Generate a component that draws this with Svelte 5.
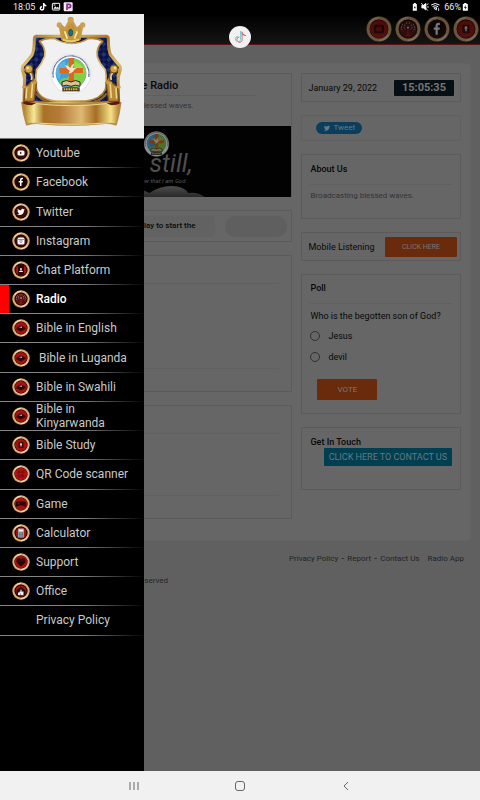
<script>
	const menu = [
		{ label: 'Youtube', icon: 'youtube' },
		{ label: 'Facebook', icon: 'facebook' },
		{ label: 'Twitter', icon: 'twitter' },
		{ label: 'Instagram', icon: 'instagram' },
		{ label: 'Chat Platform', icon: 'chat' },
		{ label: 'Radio', icon: 'radio', active: true },
		{ label: 'Bible in English', icon: 'bible' },
		{ label: '\u00a0Bible in Luganda', icon: 'bible' },
		{ label: 'Bible in Swahili', icon: 'bible' },
		{ label: 'Bible in Kinyarwanda', icon: 'bible' },
		{ label: 'Bible Study', icon: 'study' },
		{ label: 'QR Code scanner', icon: 'qr' },
		{ label: 'Game', icon: 'game' },
		{ label: 'Calculator', icon: 'calculator' },
		{ label: 'Support', icon: 'support' },
		{ label: 'Office', icon: 'office' },
		{ label: 'Privacy Policy', icon: '' }
	];

	const shortcuts = [
		{ label: 'Youtube', icon: 'youtubeRed' },
		{ label: 'Radio', icon: 'radio' },
		{ label: 'Facebook', icon: 'facebook' },
		{ label: 'Bible Study', icon: 'study' }
	];

	const answers = ['Jesus', 'devil'];
	let vote = $state('');
</script>

{#snippet badge(icon)}
	<svg class="badge" viewBox="0 0 36 36" aria-hidden="true">
		<circle cx="18" cy="18" r="17.5" fill="#8a5a2c" />
		<circle cx="18" cy="18" r="15" fill="none" stroke="#dcae7a" stroke-width="4" />
		<path d="M5 10A15.5 15.5 0 0 1 18 2.500M31 26A15.500 15.500 0 0 1 18 33.500" fill="none" stroke="#f7e2bd" stroke-width="2" />
		<circle cx="18" cy="18" r="13" fill="#1b0504" />
		<circle cx="18" cy="18" r="11" fill={['youtube', 'facebook', 'twitter', 'instagram'].includes(icon) ? '#3d0a08' : '#a80f10'} />
		{#if icon === 'youtube'}
			<rect x="11" y="13" width="14" height="10" rx="3" fill="#fff" />
			<path d="M16 15.500v5l4-2.500z" fill="#3d0a08" />
		{:else if icon === 'youtubeRed'}
			<circle cx="18" cy="18" r="12.500" fill="#a80f10" />
			<rect x="11" y="12" width="14" height="12" rx="3" fill="#330606" />
			<rect x="14" y="15" width="8" height="6" rx="1" fill="#8c1111" />
		{:else if icon === 'facebook'}
			<circle cx="18" cy="18" r="10.500" fill="#140404" />
			<path d="M16 26v-7h-2.500v-3H16v-2c0-3 1.500-4.500 4-4.500h2v3h-1.500c-1 0-1.500.5-1.500 1.500v2h3l-.5 3H19v7z" fill="#fff" />
		{:else if icon === 'twitter'}
			<path d="M10 23c6 3 14 0 14-8l2-2-2 .3 1-1.500-2 .7c-2-2-5-.5-4.500 2-3 0-5-1-7-3-1 2 0 3.500 1 4.500l-1.500-.4c0 2 1 3 2.500 3.500h-1.500c.5 1.300 1.500 2 3 2.300-1.500 1-3 1.500-5 1.600z" fill="#fff" />
		{:else if icon === 'instagram'}
			<rect x="11" y="11" width="14" height="14" rx="3" fill="#fff" />
			<path d="M12 15h12" stroke="#4a1412" stroke-width="1" />
			<circle cx="18" cy="18.500" r="2.500" fill="none" stroke="#8a6462" stroke-width="1.500" />
		{:else if icon === 'chat'}
			<rect x="12" y="8" width="12" height="20" fill="#280507" />
			<circle cx="18" cy="16" r="2" fill="#eee" />
			<path d="M14 22c0-4 8-4 8 0z" fill="#eee" />
		{:else if icon === 'radio'}
			<circle cx="18" cy="18" r="10.500" fill="#54100f" />
			<path d="M17 19h2l2 9h-6z" fill="#8f1112" />
			<circle cx="18" cy="16" r="1.500" fill="#ddd" />
			<path d="M14 12c-2 2-2 5 0 7M22 12c2 2 2 5 0 7M11 11c-3 4-3 7 0 10M25 11c3 4 3 7 0 10M16 9v3M20 9v3" fill="none" stroke="#aaa" stroke-width="1.300" stroke-dasharray="2 1.500" />
		{:else if icon === 'bible'}
			<circle cx="18" cy="18" r="12" fill="#a80f10" />
			<path d="M9 18l8-5 10 4-9 6z" fill="#240506" />
			<path d="M9 18l9 4 9-5v3l-9 5-9-4z" fill="#300707" />
			<path d="M15 17l5-1M18 15l1 3" stroke="#ddd" stroke-width="1.300" />
		{:else if icon === 'study'}
			<circle cx="18" cy="18" r="12" fill="#a80f10" />
			<rect x="13" y="12" width="10" height="12" rx="1" fill="#3d0909" />
			<path d="M18 14v7M16 16.500h4" stroke="#f5eaea" stroke-width="2" />
		{:else if icon === 'qr'}
			<circle cx="18" cy="18" r="12.500" fill="#b01012" />
			<path d="M12 12h4v4h-4zM20 12h4v4h-4zM12 20h4v4h-4zM19 19h2v2h3v3h-4z" fill="none" stroke="#600d10" stroke-width="1.500" />
		{:else if icon === 'game'}
			<circle cx="18" cy="18" r="12.500" fill="#a80f10" />
			<path d="M10 13h16c3 0 3 9 2 10-2 2-5-2-6-2h-8c-1 0-4 4-6 2-1-1-1-10 2-10z" fill="#250506" />
			<path d="M13 15v4M11 17h4M21 16h2M23 19h2" stroke="#8b1715" stroke-width="1" />
		{:else if icon === 'calculator'}
			<rect x="12" y="9" width="12" height="18" rx="1" fill="#8f9ba1" />
			<rect x="13.500" y="11" width="9" height="4" fill="#edf5f6" />
			<path d="M14 18h8M14 21h8M14 24h8" stroke="#5c686d" stroke-width="2" stroke-dasharray="2 1" />
		{:else if icon === 'support'}
			<circle cx="18" cy="18" r="12.500" fill="#a80f10" />
			<path d="M18 27c-5-4-10-8-9-13 1-4 7-5 9-1 2-4 8-3 9 1 1 5-4 9-9 13z" fill="#280607" />
			<path d="M13 14l3 3 3-3 3 4" fill="none" stroke="#761415" />
		{:else if icon === 'office'}
			<path d="M9 17l9-8 9 8v9H9z" fill="#220506" />
			<path d="M12 21h3v-2h2v-4h2v4h4v7H12z" fill="#f0eeee" />
			<path d="M17 23h1v3h-1z" fill="#5a1312" />
		{/if}
	</svg>
{/snippet}

{#snippet emblem()}
	<circle r="59" fill="#fff" stroke="#c3cbe6" stroke-width="1.500" />
	<path d="M-53 10A54 54 0 1 1 53 10" fill="none" stroke="#29325f" stroke-width="4" stroke-dasharray="2 1.500" />
	<circle cy="-2" r="46" fill="#3b9fe0" />
	<path d="M0-48A46 46 0 0 1 44 10Q38 34 8 43L-14 36-14 14-4 2-12-28z" fill="#7fd044" />
	<path d="M-45-12q8-22 28-28l2 26-16 6-2 26q-14-10-12-30z" fill="#58b3e8" />
	<path d="M-36 22q14-16 24-8v22q-16-2-24-14z" fill="#74c94c" />
	<path d="M12-36q22 8 30 28l-10 8-20-12z" fill="#9edc4a" />
	<path d="M-7-48H9v30h27v15H9v30H-7V-3h-28v-15h28z" fill="#dc691f" />
	<path d="M-18-27q10 2 16 9 4-12 12-13-2 8-5 13 8-1 12 1-8 3-10 9-6 7-14 6 1-5 4-7-10-5-15-18z" fill="#f3e6d6" />
	<path d="M-27 24q13-9 27 0 14-9 27 0v13q-13-7-27 0-14-7-27 0z" fill="#d9c49b" stroke="#322116" stroke-width="3" />
	<path d="M-26 40h52v12h-52z" fill="#3e2b18" />
	<path d="M-22 46h44" stroke="#d7b35c" stroke-width="6" stroke-dasharray="5 2" />
{/snippet}

<div class="screen">
	<div class="status">
		<span>18:05</span>
		<svg class="status-left" viewBox="0 0 105 30" aria-hidden="true">
			<path d="M14 3v16a5 5 0 1 1-5-5M14 4q2 7 8 7" fill="none" stroke="#fff" stroke-width="4.500" />
			<rect x="40" y="4" width="22" height="20" rx="2" fill="none" stroke="#fff" stroke-width="3" />
			<path d="M43 20l6-7 4 4 4-3 4 6z" fill="#fff" /><path d="M44 9h5" stroke="#fff" stroke-width="3" />
			<rect x="74" y="1" width="27" height="27" rx="3" fill="#f5eef9" />
			<path d="M84 24V7h6a5 5 0 0 1 0 10h-6" fill="none" stroke="#803093" stroke-width="5" />
			<path d="M84 24v-8" stroke="#d8343f" stroke-width="5" />
		</svg>
		<svg class="status-right" viewBox="0 0 92 30" aria-hidden="true">
			<path d="M11 6h3V3h6v3h3v20H11z" fill="#fff" /><path d="M14 19l3-7 3 7z" fill="#111" />
			<path d="M38 10h5l7-6v20l-7-6h-5zM36 3l20 23M52 9l6-4M53 15h6" fill="#fff" stroke="#fff" stroke-width="2.500" />
			<path d="M66 9q12-9 25 0M70 14q8-6 17 0M74 18q5-3 9 0l-4 5z" fill="none" stroke="#fff" stroke-width="3" />
			<path d="M82 25v-8l-3 3M88 17v9l3-3" fill="none" stroke="#fff" stroke-width="2" />
		</svg>
		<span>66%</span>
		<svg class="battery" viewBox="0 0 20 30" aria-hidden="true">
			<path d="M2 6h4V3h7v3h4v20H2z" fill="#fff" /><path d="M11 9l-6 8h4l-1 6 6-8h-4z" fill="#111" />
		</svg>
	</div>

	<header>
		{#each shortcuts as item}
			<a href="#{item.icon}" aria-label={item.label}>{@render badge(item.icon)}</a>
		{/each}
	</header>

	<div class="page">
		<main>
			<div class="column">
				<section class="panel station">
					<h1>Gospel Life Radio</h1>
					<p>Broadcasting blessed waves.</p>
					<svg class="banner" viewBox="0 0 272 71" preserveAspectRatio="xMaxYMid slice" role="img" aria-label="Be still">
						<defs>
							<linearGradient id="mist" x2="0" y2="1"><stop stop-color="#555" /><stop offset="1" stop-color="#292929" /></linearGradient>
						</defs>
						<rect width="272" height="71" fill="#020202" />
						<path d="M80 71V58q30-2 50 9 10-7 22-7 12 0 17 7 10-1 16 4z" fill="url(#mist)" />
						<g transform="translate(137 18) scale(.21)" opacity=".55">{@render emblem()}</g>
						<text x="173" y="46" text-anchor="end" font-size="25" font-style="italic" fill="#505050">Be still,</text>
						<text x="166" y="57" text-anchor="end" font-size="6" font-style="italic" fill="#5a5a5a">and know that I am God</text>
					</svg>
				</section>
				<section class="panel player">
					<p>Press play to start the</p>
					<div class="track"></div>
				</section>
				<section class="panel program"><div class="lines"></div></section>
				<section class="panel comments"><div class="lines"></div></section>
			</div>

			<div class="column">
				<section class="panel row date">
					<time>January 29, 2022</time>
					<strong>15:05:35</strong>
				</section>
				<section class="panel share">
					<a class="tweet" href="#tweet">
						<svg viewBox="8 9 20 17" aria-hidden="true"><path d="M10 23c6 3 14 0 14-8l2-2-2 .3 1-1.500-2 .7c-2-2-5-.5-4.500 2-3 0-5-1-7-3-1 2 0 3.500 1 4.500l-1.500-.4c0 2 1 3 2.500 3.500h-1.500c.5 1.300 1.500 2 3 2.300-1.500 1-3 1.500-5 1.600z" fill="currentColor" /></svg>
						Tweet
					</a>
				</section>
				<section class="panel about">
					<h2>About Us</h2>
					<p>Broadcasting blessed waves.</p>
				</section>
				<section class="panel row mobile">
					<span>Mobile Listening</span>
					<button class="orange">CLICK HERE</button>
				</section>
				<section class="panel poll">
					<h2>Poll</h2>
					<fieldset>
						<legend>Who is the begotten son of God?</legend>
						{#each answers as answer}
							<label><input type="radio" name="poll" value={answer} bind:group={vote} />{answer}</label>
						{/each}
					</fieldset>
					<button class="orange">VOTE</button>
				</section>
				<section class="panel contact">
					<h2>Get In Touch</h2>
					<button>CLICK HERE TO CONTACT US</button>
				</section>
			</div>
		</main>

		<footer>
			<div class="links">
				<a href="#privacy">Privacy Policy</a><b>-</b><a href="#report">Report</a><b>-</b><a href="#contact">Contact Us</a><a class="app" href="#app">Radio App</a>
			</div>
			<p>© 2022 All rights reserved</p>
		</footer>
	</div>

	<aside>
		<svg class="crest" viewBox="0 42 432 372" role="img" aria-label="Royal crest">
			<defs>
				<linearGradient id="gold" x2="1" y2="1">
					<stop stop-color="#9a6c28" /><stop offset=".22" stop-color="#dcbf72" /><stop offset=".45" stop-color="#ac7728" /><stop offset=".7" stop-color="#dfc06c" /><stop offset="1" stop-color="#8a5917" />
				</linearGradient>
				<linearGradient id="ribbon">
					<stop stop-color="#a56d18" /><stop offset=".12" stop-color="#f7e997" /><stop offset=".22" stop-color="#a87225" /><stop offset=".38" stop-color="#b47b39" /><stop offset=".6" stop-color="#e0b974" /><stop offset=".75" stop-color="#a56e24" /><stop offset=".9" stop-color="#f5e288" /><stop offset="1" stop-color="#a76e20" />
				</linearGradient>
				<pattern id="velvet" width="22" height="22" patternUnits="userSpaceOnUse" patternTransform="rotate(45)">
					<rect width="22" height="22" fill="#0a1248" /><rect width="11" height="11" fill="#1f3675" /><rect x="11" y="11" width="11" height="11" fill="#121f5c" />
				</pattern>
			</defs>
			<path d="M107 109h212q6 1 6 8 0 34 7 48 14 18 28 34 4 14-6 26l2 84H72l2-84q-10-12-6-26 14-16 28-34 7-14 7-48 0-7 4-8z" fill="url(#velvet)" stroke="url(#gold)" stroke-width="9" stroke-linejoin="round" />
			<path d="M118 124q20 18 16 45-8 22-24 40-6 30 0 60 10 30 60 34h88q45-5 58-34 6-30 0-60-18-18-24-40-4-27 16-45-18-12-44-8-20 14-50 14t-50-14q-26-4-46 8z" fill="#f1f1f1" stroke="url(#gold)" stroke-width="5" stroke-linejoin="round" />
			<path d="M180 75l16 13 16-30 17 30 17-13-8 42q-26 12-50 0z" fill="url(#gold)" stroke="#c49a4b" stroke-width="9" stroke-linejoin="round" />
			<path d="M184 84l14 12 14-26 15 26 14-12-7 34q-22 8-43 0z" fill="#c69435" />
			<path d="M194 94l8 22M232 94l-9 22" stroke="#f7ebaa" stroke-width="5" />
			<g fill="#c9a056"><circle cx="178" cy="75" r="8" /><circle cx="212" cy="59" r="9" /><circle cx="248" cy="75" r="8" /></g>
			<ellipse cx="212" cy="98" rx="6" ry="10" fill="#0a75a6" stroke="#243a2b" stroke-width="2" />
			<path d="M188 119q24 9 49 0" fill="none" stroke="#e9cb65" stroke-width="6" />
			{#each ['', 'translate(428 0) scale(-1 1)'] as flip}
				<g transform={flip}>
					<path d="M86 208q20 12 12 34l-22 20-4 42h30l8-58" fill="#b98933" stroke="#79501b" stroke-width="4" />
					<path d="M84 214q16 10 10 26M98 246l-4 48M80 262l-2 34" fill="none" stroke="#edd48a" stroke-width="5" />
					<circle cx="86" cy="207" r="12" fill="#d1a341" stroke="#73501e" stroke-width="3" />
					<circle cx="83" cy="204" r="4" fill="#f3e2a2" />
					<path d="M72 206q-6 18 2 34M66 262h20M92 248h18" fill="none" stroke="#caa04c" stroke-width="6" />
				</g>
			{/each}
			<path d="M108 280q15 20 38 25M320 280q-15 20-38 25" fill="none" stroke="#8f6422" stroke-width="7" />
			<path d="M66 308q20 8 40-2 108 14 216 0 20 10 40 2-4 34-14 66-20-6-40-4-94 9-188 0-20-2-40 4-10-32-14-66z" fill="url(#ribbon)" stroke="#b58b45" stroke-width="5" stroke-linejoin="round" />
			<path d="M66 309q10-8 22-2l20 3-14 6q-16 0-28-7zM362 309q-10-8-22-2l-20 3 14 6q16 0 28-7z" fill="#5a1a0c" />
			<path d="M108 311q106 12 212 0M96 368q120 10 236 0" fill="none" stroke="#ecd793" stroke-width="3" />
			<g transform="translate(213 222)">{@render emblem()}</g>
		</svg>
		<nav>
			{#each menu as item}
				<a class:active={item.active} href="#{item.label.trim()}">
					<span class="icon">{#if item.icon}{@render badge(item.icon)}{/if}</span>
					<span>{item.label}</span>
				</a>
			{/each}
		</nav>
	</aside>

	<button class="bubble" aria-label="TikTok">
		<svg viewBox="0 0 24 24" aria-hidden="true">
			<g fill="none" stroke-width="1.500"><path d="M13 3v13a4 4 0 1 1-4-5M13 4q1 5 6 5" stroke="#56cbd3" /><path d="M15 4v13a4 4 0 1 1-4-5M15 5q1 5 6 5" stroke="#dd5364" /><path d="M14 3.500v13a4 4 0 1 1-4-5" stroke="#d5d5da" stroke-width="1" /></g>
		</svg>
	</button>

	<div class="system">
		<button aria-label="Recent apps"><svg viewBox="0 0 12 12"><path d="M2 2v8M6 2v8M10 2v8" /></svg></button>
		<button aria-label="Home"><svg viewBox="0 0 12 12"><rect x="1.500" y="1.500" width="9" height="9" rx="2.500" /></svg></button>
		<button aria-label="Back"><svg viewBox="0 0 12 12"><path d="M8 2L4 6l4 4" /></svg></button>
	</div>
</div>

<style>
	:global(body) {
		margin: 0;
		background: #606060;
	}

	.screen {
		position: relative;
		min-height: 100vh;
		display: flex;
		flex-direction: column;
		background: #606060;
		color: #080808;
		font-family: Roboto, sans-serif;
		font-size: 9px;
		line-height: 12px;
	}

	.screen * {
		box-sizing: border-box;
	}

	h1, h2, p {
		margin: 0;
		font-weight: 500;
	}

	a {
		color: inherit;
		text-decoration: none;
	}

	button {
		border: 0;
		padding: 0;
		font-family: inherit;
		cursor: pointer;
	}

	svg {
		display: block;
	}

	.status {
		height: 14px;
		padding: 0 11px 0 13px;
		display: flex;
		align-items: center;
		gap: 4px;
		background: #000;
		color: #eee;
		font-size: 9px;
	}

	.status-left {
		width: 35px;
		height: 10px;
		margin-right: auto;
	}

	.status-right {
		width: 31px;
		height: 10px;
	}

	.battery {
		width: 7px;
		height: 10px;
		margin-left: -3px;
	}

	header {
		height: 31px;
		display: flex;
		justify-content: flex-end;
		align-items: center;
		gap: 3px;
		padding-right: 1px;
		background: linear-gradient(#000, #151515);
		border-bottom: 1px solid #5a1515;
	}

	header .badge {
		width: 26px;
		height: 26px;
		opacity: 0.45;
	}

	.page {
		flex: 1;
		padding: 18px 9px 0;
	}

	main {
		display: grid;
		grid-template-columns: 12fr 7fr;
		gap: 9px;
		padding: 9px 9px 21px;
		background: #666;
		border: 1px solid #636363;
		border-radius: 4px;
	}

	.column {
		display: flex;
		flex-direction: column;
		gap: 13px;
		min-width: 0;
	}

	.panel {
		border: 1px solid #5b5b5b;
	}

	.station {
		border-bottom: 0;
	}

	.station h1 {
		margin: 0 36px 4px 0;
		padding: 6px 0 3px 72px;
		border-bottom: 1px solid #5e5e5e;
		font-size: 11px;
	}

	.station p {
		padding-left: 70px;
		color: #343434;
		font-size: 8px;
		font-weight: 400;
	}

	.banner {
		width: 100%;
		height: 71px;
		margin-top: 14px;
	}

	.player {
		display: flex;
		align-items: center;
		gap: 10px;
		height: 32px;
		padding: 0 4px;
	}

	.player p {
		flex: 1;
		padding: 4px 20px 5px;
		background: #626262;
		border-radius: 4px;
		font-size: 8px;
		text-align: right;
	}

	.track {
		flex: 0 0 62px;
		height: 21px;
		border-radius: 10px;
		background: #5f5f5f;
	}

	.program {
		height: 137px;
		padding: 27px 12px 22px;
	}

	.comments {
		height: 114px;
		padding: 27px 12px 22px;
	}

	.lines {
		height: 100%;
		border: solid #606060;
		border-width: 1px 0;
	}

	.row {
		display: flex;
		align-items: center;
		justify-content: space-between;
		padding: 0 6px;
	}

	.date {
		height: 29px;
	}

	.date strong {
		padding: 2px 8px;
		background: #060f14;
		border-radius: 1px;
		color: #777;
		font-size: 11px;
	}

	.share {
		padding: 6px 14px;
		border-color: #606060;
	}

	.tweet {
		display: inline-flex;
		align-items: center;
		gap: 2px;
		padding: 0 7px;
		vertical-align: top;
		background: #0b3d5c;
		border-radius: 6px;
		color: #6b7981;
		font-size: 8px;
	}

	.tweet svg {
		width: 8px;
		height: 8px;
	}

	.about,
	.poll,
	.contact {
		padding: 8px;
	}

	h2 {
		font-size: 9px;
	}

	.about h2,
	.poll h2 {
		padding-bottom: 9px;
		border-bottom: 1px solid #606060;
	}

	.about p {
		padding: 5px 0 8px;
		color: #343434;
		font-size: 8px;
		font-weight: 400;
	}

	.mobile {
		height: 29px;
		padding-right: 3px;
	}

	.orange {
		border-radius: 1px;
		background: #6a2b0c;
		color: #777;
	}

	.mobile .orange {
		width: 72px;
		height: 20px;
		font-size: 7px;
	}

	.poll {
		padding-top: 7px;
	}

	fieldset {
		border: 0;
		margin: 0;
		padding: 3px 0 0;
	}

	legend {
		padding: 6px 0 0;
	}

	label {
		display: flex;
		align-items: center;
		gap: 8px;
		height: 21px;
	}

	input {
		appearance: none;
		width: 10px;
		height: 10px;
		margin: 0;
		border: 1px solid #303030;
		border-radius: 50%;
	}

	input:checked {
		background: #303030;
	}

	.poll .orange {
		display: block;
		width: 60px;
		height: 21px;
		margin: 12px 7px 5px;
		font-size: 8px;
	}

	.contact {
		padding-bottom: 23px;
	}

	.contact button {
		display: block;
		height: 18px;
		margin-left: auto;
		padding: 0 5px;
		border-radius: 1px;
		background: #003f52;
		color: #68797e;
		font-size: 9px;
	}

	footer {
		padding-top: 12px;
		color: #242424;
		font-size: 8px;
	}

	.links {
		display: flex;
		justify-content: flex-end;
		gap: 3px;
		padding-right: 7px;
	}

	.app {
		margin-left: 5px;
	}

	footer p {
		width: 159px;
		padding-top: 10px;
		text-align: right;
		font-weight: 400;
	}

	/* drawer lies over the page between the two system bars */
	aside {
		position: absolute;
		top: 14px;
		bottom: 29px;
		left: 0;
		width: 30%;
		display: flex;
		flex-direction: column;
		background: #000;
	}

	aside::after {
		content: '';
		flex: 3;
	}

	.crest {
		width: 100%;
		background: #eee;
	}

	nav {
		flex: 11;
		display: grid;
		grid-auto-rows: 1fr;
		border-top: 1px solid #777;
	}

	nav a {
		display: flex;
		align-items: center;
		gap: 6px;
		padding-left: 12px;
		padding-right: 14px;
		border-bottom: 1px solid;
		border-image: linear-gradient(90deg, #858585 55%, #000) 1;
		color: #c9c9c9;
		font-size: 12px;
		line-height: 14px;
	}

	nav .active {
		background: linear-gradient(90deg, #f00 9px, transparent 9px);
		color: #fff;
		font-weight: 500;
	}

	.icon {
		flex: 0 0 18px;
	}

	.icon .badge {
		width: 18px;
		height: 18px;
	}

	.bubble {
		position: absolute;
		top: 26px;
		left: calc(50% - 11px);
		width: 22px;
		height: 22px;
		border-radius: 50%;
		background: #f1f1f1;
	}

	.bubble svg {
		width: 16px;
		margin: auto;
	}

	.system {
		height: 29px;
		display: grid;
		grid-template-columns: repeat(3, 1fr);
		padding: 0 17%;
		background: #f1f1f1;
	}

	.system button {
		background: none;
	}

	.system svg {
		width: 12px;
		margin: auto;
		fill: none;
		stroke: #666;
		stroke-width: 1;
	}
</style>
